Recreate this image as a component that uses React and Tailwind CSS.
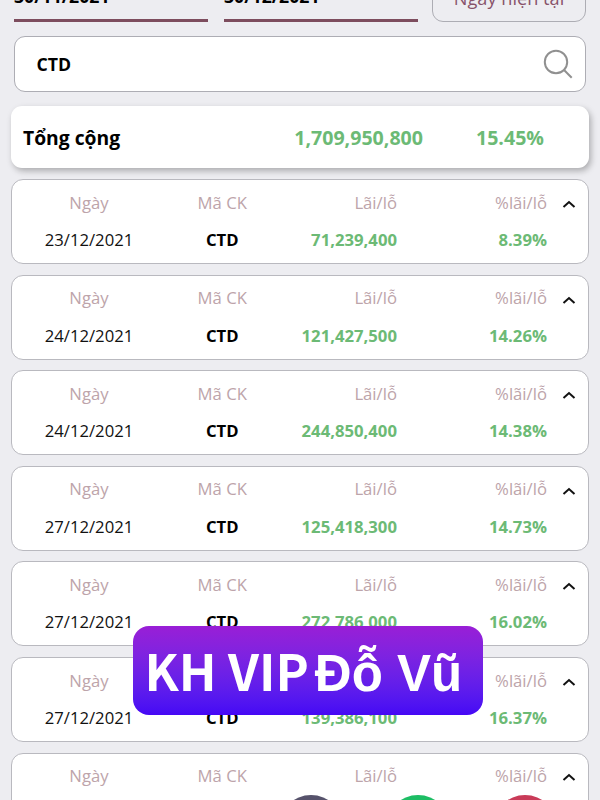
const trades = [
  { date: '23/12/2021', profit: '71,239,400', percent: '8.39%' },
  { date: '24/12/2021', profit: '121,427,500', percent: '14.26%' },
  { date: '24/12/2021', profit: '244,850,400', percent: '14.38%' },
  { date: '27/12/2021', profit: '125,418,300', percent: '14.73%' },
  { date: '27/12/2021', profit: '272,786,000', percent: '16.02%' },
  { date: '27/12/2021', profit: '139,386,100', percent: '16.37%' },
  { date: '', profit: '', percent: '' },
]

function DateField({ value }) {
  return (
    <div className="flex h-[21.5px] w-[194px] flex-col justify-end border-b-[3px] border-[#7d4d5e] pb-[13px] text-[17.7px] leading-[20px] font-bold text-black">
      {value}
    </div>
  )
}

function SearchIcon() {
  return (
    <svg viewBox="0 0 30 30" className="h-[30px] w-[30px]" fill="none" stroke="#909090" strokeWidth="2">
      <circle cx="13" cy="13" r="11.2" />
      <path d="M20.8 20.8 L28.7 28.7" />
    </svg>
  )
}

function TradeCard({ date, profit, percent }) {
  return (
    <div className="flex h-[84.8px] shrink-0 rounded-[12px] border-[1.3px] border-[#b9b9bf] bg-white text-[16.7px] leading-[22px]">
      <div className="grid h-[60px] w-[535px] grid-cols-[153.6px_113px_118.2px_150px] gap-y-[15.5px] pt-[11.5px]">
        <span className="text-center text-[#bda4aa]">Ngày</span>
        <span className="text-center text-[#bda4aa]">Mã CK</span>
        <span className="text-right text-[#bda4aa]">Lãi/lỗ</span>
        <span className="text-right text-[#bda4aa]">%lãi/lỗ</span>
        <span className="text-center text-[#111]">{date}</span>
        <span className="text-center font-bold text-black">{date && 'CTD'}</span>
        <span className="text-right font-bold text-[#6cba75]">{profit}</span>
        <span className="text-right font-bold text-[#6cba75]">{percent}</span>
      </div>
      <svg
        viewBox="0 0 14 8"
        className="mt-[19.8px] ml-[15px] h-[8px] w-[14px]"
        fill="none"
        stroke="#111"
        strokeWidth="2"
      >
        <path d="M1.5 7 L7 2 L12.5 7" />
      </svg>
    </div>
  )
}

export default function App() {
  return (
    <main className="relative h-[800px] w-[600px] overflow-hidden bg-[#ededf1] font-['Open_Sans',sans-serif]">
      <div className="flex h-[22px] items-end gap-[16px] pl-[14px]">
        <DateField value="30/11/2021" />
        <DateField value="30/12/2021" />
        <div className="-ml-[2px] flex h-[50px] w-[154px] items-end justify-center rounded-[11px] border-[1.5px] border-[#adadb4] pb-[12px] text-[18.2px] leading-[22px] text-[#88536a]">
          Ngày hiện tại
        </div>
      </div>

      <div className="mx-[14px] mt-[14px] flex h-[56px] items-center justify-between rounded-[11px] border-[1.5px] border-[#adadb4] bg-white pr-[12px] pl-[21.5px]">
        <span className="text-[17.7px] leading-[24px] font-bold text-black">CTD</span>
        <SearchIcon />
      </div>

      <div className="mx-[11px] mt-[14px] flex h-[62px] items-center rounded-[11px] bg-white pt-[1px] pl-[12px] text-[19.3px] leading-[26px] font-bold shadow-[2px_3px_6px_rgba(0,0,0,0.28)]">
        <span className="w-[200px] text-black">Tổng cộng</span>
        <span className="w-[200px] text-right text-[19.6px] text-[#6cba75]">1,709,950,800</span>
        <span className="w-[121px] text-right text-[19.6px] text-[#6cba75]">15.45%</span>
      </div>

      <div className="mx-[11.2px] mt-[11.3px] flex flex-col gap-[10.75px]">
        {trades.map((trade, index) => (
          <TradeCard key={index} {...trade} />
        ))}
      </div>

      <div className="absolute top-[626px] left-[132.5px] flex h-[88.5px] w-[350.5px] items-baseline gap-[6px] rounded-[16px] bg-linear-to-b from-[#991ed6] to-[#4507f5] pt-[18px] pl-[12px] text-[50px] leading-none font-bold whitespace-nowrap text-white">
        <span className="font-['Noto_Sans_CJK_SC',sans-serif]">KH VIP</span>
        <span className="font-['Liberation_Sans',sans-serif] text-[51px]">Đỗ Vũ</span>
      </div>

      <div className="absolute top-[795px] left-[279px] h-[64px] w-[64px] rounded-full bg-[#56526b]" />
      <div className="absolute top-[795px] left-[386px] h-[64px] w-[64px] rounded-full bg-[#1dbd64]" />
      <div className="absolute top-[795px] left-[493px] h-[64px] w-[64px] rounded-full bg-[#c93b58]" />
    </main>
  )
}
